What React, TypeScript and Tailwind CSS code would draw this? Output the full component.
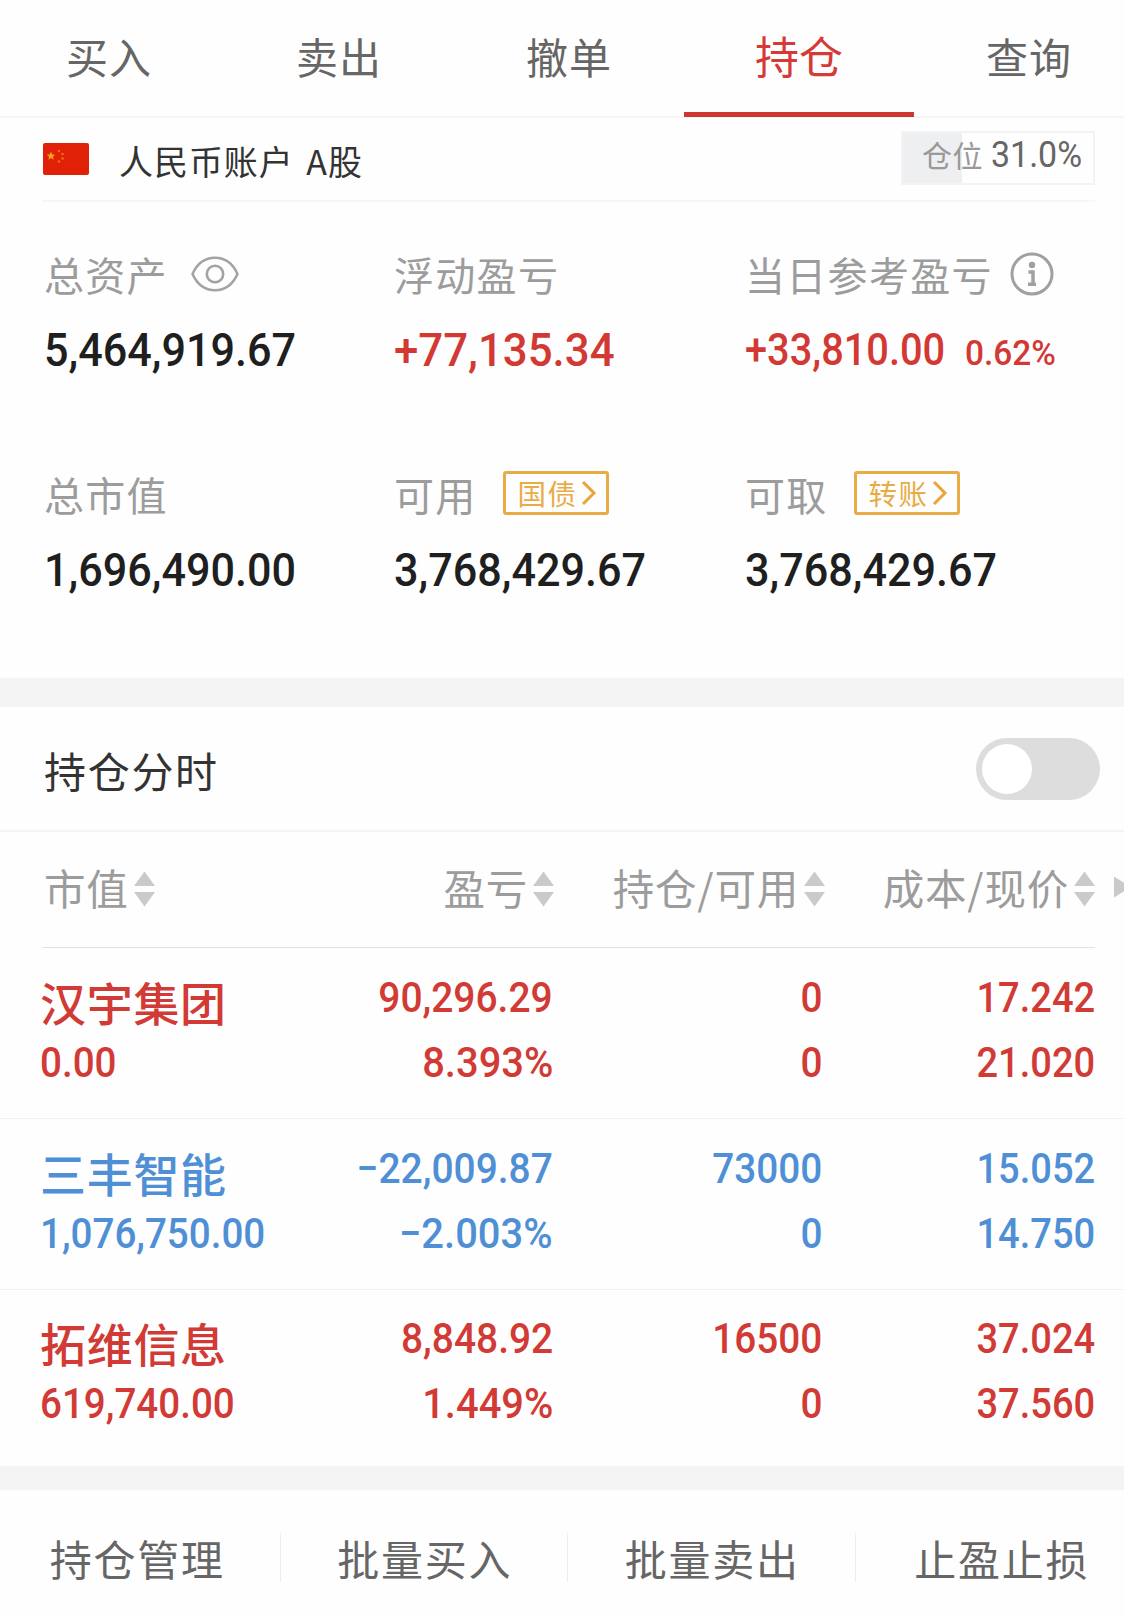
import React from "react";

const cjk = "font-['Noto_Sans_CJK_SC',sans-serif]";
const num = "font-['Roboto',sans-serif] font-medium inline-block whitespace-nowrap";

const tabs = ["买入", "卖出", "撤单", "持仓", "查询"];
const actions = ["持仓管理", "批量买入", "批量卖出", "止盈止损"];

const holdings = [
  { name: "汉宇集团", value: "0.00", profit: "90,296.29", rate: "8.393%", held: "0", free: "0", cost: "17.242", price: "21.020", color: "text-[#d13a35]", offset: "" },
  { name: "三丰智能", value: "1,076,750.00", profit: "−22,009.87", rate: "−2.003%", held: "73000", free: "0", cost: "15.052", price: "14.750", color: "text-[#4f8fd6]", offset: "" },
  { name: "拓维信息", value: "619,740.00", profit: "8,848.92", rate: "1.449%", held: "16500", free: "0", cost: "37.024", price: "37.560", color: "text-[#d13a35]", offset: "-mt-px" },
];

function Flag() {
  return (
    <svg width="46" height="32" viewBox="0 0 46 32" className="ml-px mt-[25px] shrink-0">
      <rect width="46" height="32" rx="2" fill="#e02108" />
      <path d="M8 8.6l1.2 2.9 3.1.2-2.4 2 .8 3L8 15l-2.700 1.700.8-3-2.400-2 3.100-.2z" fill="#f9a51a" />
      <circle cx="16" cy="8" r="1.300" fill="#ef6a14" />
      <circle cx="19.500" cy="11" r="1.300" fill="#ef6a14" />
      <circle cx="19.500" cy="15.500" r="1.300" fill="#ef6a14" />
      <circle cx="16" cy="18.500" r="1.300" fill="#ef6a14" />
    </svg>
  );
}

function Eye() {
  return (
    <svg width="48" height="36" viewBox="0 0 48 36" fill="none" stroke="#a3a3a3" strokeWidth="2.600" className="ml-[23px]">
      <path d="M1.500 18C6 8 14 1.800 24 1.800S42 8 46.500 18C42 28 34 34.200 24 34.200S6 28 1.500 18z" strokeLinejoin="round" />
      <circle cx="24" cy="18" r="8.200" />
    </svg>
  );
}

function Info() {
  return (
    <svg width="44" height="44" viewBox="0 0 44 44" fill="none" className="ml-[17px]">
      <circle cx="22" cy="22" r="20" stroke="#a0a0a0" strokeWidth="3" />
      <circle cx="22" cy="13" r="3.200" fill="#a0a0a0" />
      <path d="M18.500 20h4.500v12M18 32.200h8" stroke="#a0a0a0" strokeWidth="3.500" />
    </svg>
  );
}

function Badge({ text, className }: { text: string; className: string }) {
  return (
    <span className={`-mt-[2px] flex h-[44px] w-[106px] items-center rounded-[3px] border-[3px] border-[#e9ac45] pl-[12px] text-[28.500px] text-[#e9ac45] ${className}`}>
      <span className="-mt-px whitespace-nowrap">{text}</span>
      <svg width="16" height="26" viewBox="0 0 16 26" fill="none" stroke="#e9a53a" strokeWidth="3" className="ml-[4px]">
        <path d="M2 2l11 11L2 24" />
      </svg>
    </span>
  );
}

function Sort() {
  return (
    <svg width="21" height="36" viewBox="0 0 21 36" fill="#cacaca" className="ml-[5px] mt-[3px] shrink-0">
      <path d="M10.500 0.500L21 15H0zM10.500 35.500L21 21H0z" />
    </svg>
  );
}

function Stat({ label, extra, children }: { label: string; extra?: React.ReactNode; children: React.ReactNode }) {
  return (
    <div>
      <div className="flex h-[60px] items-center text-[40px] leading-[60px] tracking-[1.300px] text-[#9c9c9c]">
        <span className="whitespace-nowrap">{label}</span>
        {extra}
      </div>
      <div className="mt-[16px] flex h-[60px] leading-[60px]">{children}</div>
    </div>
  );
}

function Big({ children, red }: { children: string; red?: boolean }) {
  return (
    <span className={`${num} origin-left text-[47px] ${red ? "scale-x-[0.932] text-[#d33934]" : "scale-x-[0.918] text-[#1f1f1f]"}`}>{children}</span>
  );
}

function Cell({ top, bottom, topScale, bottomScale, pad }: { top: string; bottom: string; topScale: string; bottomScale: string; pad: string }) {
  return (
    <div className={`flex flex-col items-end gap-[5px] pt-[19px] text-[43px] leading-[60px] ${pad}`}>
      <span className={`${num} origin-right ${topScale}`}>{top}</span>
      <span className={`${num} origin-right ${bottomScale}`}>{bottom}</span>
    </div>
  );
}

const columns = "grid grid-cols-[260px_252px_271px_270px] pl-[42px]";

export default function App() {
  return (
    <div className={`${cjk} flex h-[1618px] w-[1124px] flex-col overflow-hidden bg-[#fefefe]`}>
      <nav className="-ml-[6px] flex h-[118px] w-[1150px] shrink-0 border-b-2 border-[#f5f5f5]">
        {tabs.map((t) => (
          <div
            key={t}
            className={
              t === "持仓"
                ? "h-[117px] w-[230px] border-b-[5px] border-[#cf3830] pt-[25px] text-center text-[44px] leading-[60px] text-[#d63a36]"
                : "h-[116px] w-[230px] pt-[26px] text-center text-[42px] leading-[60px] tracking-[1px] text-[#666]"
            }
          >
            {t}
          </div>
        ))}
      </nav>

      <div className="mx-[42px] flex h-[84px] w-[1053px] shrink-0 border-b-2 border-[#f7f7f7]">
        <Flag />
        <div className="ml-[30px] mt-[18px] text-[34px] leading-[50px] tracking-[0.950px] text-[#333] [word-spacing:4px]">人民币账户 A股</div>
        <div className="ml-auto mt-[13px] flex h-[54px] w-[194px] border-2 border-[#f3f3f5] bg-[linear-gradient(to_right,#eeeff1_59px,transparent_59px)] pl-[19px]">
          <span className="text-[30px] leading-[43px] tracking-[0.500px] text-[#999]">仓位</span>
          <span className="ml-[8px] inline-block origin-left scale-x-[0.930] font-['Roboto',sans-serif] text-[36.500px] leading-[43px] text-[#666]">31.0%</span>
        </div>
      </div>

      <section className="grid h-[476px] shrink-0 grid-cols-[350px_351px_379px] content-start gap-y-[84px] pl-[44px] pt-[42px]">
        <Stat label="总资产" extra={<Eye />}>
          <Big>5,464,919.67</Big>
        </Stat>
        <Stat label="浮动盈亏">
          <Big red>+77,135.34</Big>
        </Stat>
        <Stat label="当日参考盈亏" extra={<Info />}>
          <span className={`${num} w-[200px] origin-left scale-x-[0.912] pt-px text-[43.600px] text-[#d33934]`}>+33,810.00</span>
          <span className={`${num} ml-[20px] origin-left scale-x-[0.970] pt-[3px] text-[34.500px] text-[#d33934]`}>0.62%</span>
        </Stat>
        <Stat label="总市值">
          <Big>1,696,490.00</Big>
        </Stat>
        <Stat label="可用" extra={<Badge text="国债" className="ml-[26px]" />}>
          <Big>3,768,429.67</Big>
        </Stat>
        <Stat label="可取" extra={<Badge text="转账" className="ml-[26px]" />}>
          <Big>3,768,429.67</Big>
        </Stat>
      </section>

      <div className="h-[29px] shrink-0 bg-[#f4f4f4]" />

      <section className="flex h-[125px] shrink-0 items-center justify-between border-b-2 border-[#f4f4f4] pl-[44px] pr-[24px]">
        <h2 className="pt-[2px] text-[42px] leading-[60px] tracking-[1.700px] text-[#333]">持仓分时</h2>
        <div className="flex h-[62px] w-[124px] items-center rounded-full bg-[#dddddd] pl-[6px]">
          <div className="h-[50px] w-[50px] rounded-full bg-white" />
        </div>
      </section>

      <div className="flex h-[115px] shrink-0">
        <div className={`${columns} pt-[25px] text-[41.500px] leading-[60px] tracking-[0.800px] text-[#9c9c9c]`}>
          <div className="flex h-[60px] items-center pl-[2px]">市值<Sort /></div>
          <div className="flex h-[60px] items-center justify-end">盈亏<Sort /></div>
          <div className="flex h-[60px] items-center justify-end">持仓/可用<Sort /></div>
          <div className="flex h-[60px] items-center justify-end">成本/现价<Sort /></div>
        </div>
        <svg width="10" height="22" viewBox="0 0 10 22" fill="#cacaca" className="ml-[19px] mt-[44px] shrink-0">
          <path d="M0 0.500L17 11L0 21.500z" />
        </svg>
      </div>
      <div className="mx-[42px] h-px w-[1053px] shrink-0 bg-[#e2e2e2]" />

      {holdings.map((h, i) => (
        <div key={h.name} className={`h-[171px] shrink-0 ${i < 2 ? "border-b border-[#f0f0f0]" : ""}`}>
          <div className={`${columns} ${h.color} ${h.offset}`}>
            <div className="-ml-[2px] flex flex-col items-start pt-[22px]">
              <span className="text-[46px] font-medium leading-[62px] tracking-[0.700px]">{h.name}</span>
              <span className={`${num} origin-left scale-x-[0.897] text-[43px] leading-[60px]`}>{h.value}</span>
            </div>
            <Cell top={h.profit} bottom={h.rate} topScale="scale-x-[0.905]" bottomScale="scale-x-[0.928]" pad="pr-px" />
            <Cell top={h.held} bottom={h.free} topScale="scale-x-[0.900]" bottomScale="scale-x-[0.900]" pad="pr-[3px]" />
            <Cell top={h.cost} bottom={h.price} topScale="scale-x-[0.885]" bottomScale="scale-x-[0.885]" pad="pr-0" />
          </div>
        </div>
      ))}

      <div className="mt-[5px] h-[24px] shrink-0 bg-[#f4f4f4]" />

      <footer className="-ml-[7px] flex w-[1150px] pt-[43px]">
        {actions.map((a, i) => (
          <div
            key={a}
            className={`h-[49px] w-[287.500px] shrink-0 pl-[2px] text-center text-[42px] leading-[50px] tracking-[1.700px] text-[#666] ${i < 3 ? "border-r border-[#eeeeee]" : "pl-[5px]"}`}
          >
            {a}
          </div>
        ))}
      </footer>
    </div>
  );
}
